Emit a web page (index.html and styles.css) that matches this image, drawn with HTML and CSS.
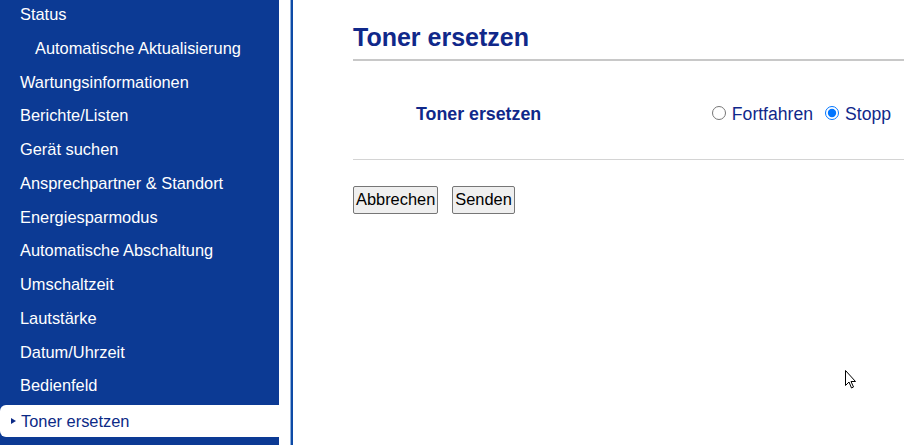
FILE: index.html
```html
<!DOCTYPE html>
<html lang="de">
<head>
<meta charset="utf-8">
<title>Toner ersetzen</title>
<link rel="stylesheet" href="styles.css">
</head>
<body>
<div class="page">
  <nav class="sidebar">
    <ul class="menu">
      <li class="item">Status</li>
      <li class="item sub">Automatische Aktualisierung</li>
      <li class="item">Wartungsinformationen</li>
      <li class="item">Berichte/Listen</li>
      <li class="item">Gerät suchen</li>
      <li class="item">Ansprechpartner &amp; Standort</li>
      <li class="item">Energiesparmodus</li>
      <li class="item">Automatische Abschaltung</li>
      <li class="item">Umschaltzeit</li>
      <li class="item">Lautstärke</li>
      <li class="item">Datum/Uhrzeit</li>
      <li class="item">Bedienfeld</li>
      <li class="item active"><span class="arrow"></span>Toner ersetzen</li>
    </ul>
  </nav>
  <div class="divider"></div>
  <main class="main">
    <h1 class="title">Toner ersetzen</h1>
    <div class="row">
      <div class="label">Toner ersetzen</div>
      <div class="options">
        <label class="opt"><input type="radio" name="toner" value="cont">Fortfahren</label>
        <label class="opt"><input type="radio" name="toner" value="stop" checked>Stopp</label>
      </div>
    </div>
    <div class="buttons">
      <button class="btn" type="button">Abbrechen</button>
      <button class="btn" type="button">Senden</button>
    </div>
  </main>
</div>
<svg class="cursor" width="12" height="20" viewBox="0 0 12 20" xmlns="http://www.w3.org/2000/svg">
  <path d="M0.5 0.5 L0.5 15.5 L4 12 L6.5 18 L8.5 17 L6 11.5 L10.5 11.5 Z" fill="#fff" stroke="#000" stroke-width="1" stroke-linejoin="miter"/>
</svg>
</body>
</html>
```
FILE: styles.css
```css
html, body {
  margin: 0;
  padding: 0;
  background: #fff;
  height: 100%;
  overflow: hidden;
}
body {
  font-family: "Liberation Sans", Arial, sans-serif;
  position: relative;
}
.page {
  display: flex;
  height: 445px;
}
.sidebar {
  width: 279px;
  flex: none;
  background: #0c3a94;
  overflow: hidden;
}
.menu {
  list-style: none;
  margin: -2px 0 0 0;
  padding: 0;
}
.item {
  height: 33.75px;
  line-height: 33.75px;
  padding-left: 20px;
  color: #fff;
  font-size: 16.4px;
  white-space: nowrap;
}
.item.sub {
  padding-left: 35px;
}
.item.active {
  background: #fff;
  color: #0c2a86;
  border-radius: 6px 0 0 6px;
  margin-top: 2px;
  height: 32px;
  line-height: 32px;
  padding-left: 11px;
  display: flex;
  align-items: center;
}
.arrow {
  width: 0;
  height: 0;
  border-top: 3.5px solid transparent;
  border-bottom: 3.5px solid transparent;
  border-left: 5px solid #0c2a86;
  margin-right: 5px;
}
.divider {
  width: 1px;
  flex: none;
  margin-left: 11px;
  background: #8fb0dc;
  border-right: 2px solid #0d4aa6;
}
.main {
  flex: 1;
  padding-left: 60px;
  min-width: 0;
}
.title {
  margin: 23px 0 0 0;
  font-size: 25px;
  line-height: 29px;
  font-weight: bold;
  color: #10288a;
  padding-bottom: 7px;
  border-bottom: 2px solid #c8c8c8;
}
.row {
  display: flex;
  align-items: center;
  justify-content: space-between;
  box-sizing: border-box;
  height: 99px;
  padding-top: 9px;
  border-bottom: 1px solid #d4d4d4;
  padding-right: 13px;
}
.label {
  padding-left: 63px;
  font-size: 17.8px;
  font-weight: bold;
  color: #10288a;
}
.options {
  display: flex;
  align-items: center;
  font-size: 17.6px;
  color: #10288a;
}
.opt {
  display: flex;
  align-items: center;
}
.opt input {
  width: 14px;
  height: 14px;
  margin: 0 6px 3px 0;
}
.opt + .opt input {
  margin-left: 12px;
}
.buttons {
  display: flex;
  gap: 14px;
  margin-top: 26px;
}
.btn {
  font-family: "Liberation Sans", Arial, sans-serif;
  font-size: 16.4px;
  padding: 3px 2px 4px;
  color: #000;
  background: #efefef;
  border: 1px solid #767676;
  border-radius: 2px;
}
.cursor {
  position: absolute;
  left: 845px;
  top: 370px;
}
```
